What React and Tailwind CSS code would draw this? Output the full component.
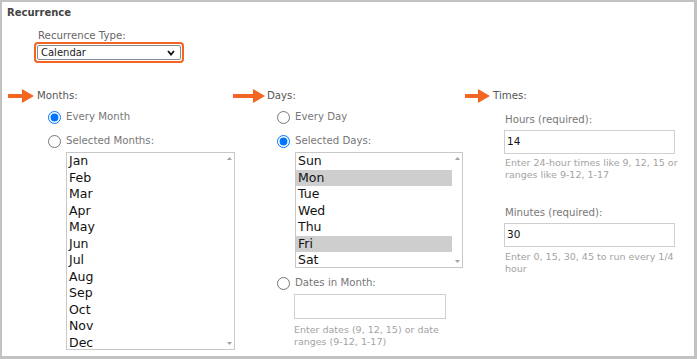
import React from "react";

const Arrow = ({ w }) => (
  <svg width={w} height="14" viewBox={`0 0 ${w} 14`} className="shrink-0">
    <rect x="0" y="5" width={w - 10} height="4" fill="#f26522" />
    <polygon points={`${w - 12},0 ${w},7 ${w - 12},14`} fill="#f26522" />
  </svg>
);

const Radio = ({ checked, label }) => (
  <label className="flex items-center h-[20px] pl-[46px] gap-[5px] text-[10.2px] text-[#777]">
    <input type="radio" readOnly checked={checked} className="w-[13px] h-[13px] m-0 shrink-0" />
    <span>{label}</span>
  </label>
);

const ListBox = ({ items, selected = [], w, h }) => (
  <div
    className="flex border border-[#c8c8c8] bg-white ml-[64px]"
    style={{ width: w, height: h }}
  >
    <div className="flex-1 flex flex-col">
      {items.map((it) => (
        <div
          key={it}
          className={`h-[16.5px] leading-[16.5px] pl-[2px] text-[12.5px] text-[#111] ${
            selected.includes(it) ? "bg-[#cecece]" : ""
          }`}
        >
          {it}
        </div>
      ))}
    </div>
    <div className="w-[10px] flex flex-col justify-between items-center py-[4px]">
      <svg width="5" height="3" viewBox="0 0 5 3">
        <polygon points="0,3 2.5,0 5,3" fill="#a3a3a3" />
      </svg>
      <svg width="5" height="3" viewBox="0 0 5 3">
        <polygon points="0,0 2.5,3 5,0" fill="#a3a3a3" />
      </svg>
    </div>
  </div>
);

const Help = ({ children, className = "" }) => (
  <div className={`text-[9.5px] leading-[12px] text-[#a3a3a3] ${className}`}>{children}</div>
);

const TextBox = ({ value, w, className = "" }) => (
  <div
    className={`h-[24px] border border-[#cfcfcf] bg-white flex items-center pl-[2px] text-[10.5px] text-[#111] ${className}`}
    style={{ width: w }}
  >
    {value}
  </div>
);

export default function App() {
  return (
    <div
      className="w-[697px] h-[359px] overflow-hidden bg-white border-t-2 border-l-2 border-r-[3px] border-b-[3px] border-[#c2c2c2]"
      style={{ fontFamily: "'DejaVu Sans', Verdana, sans-serif" }}
    >
      <div className="pl-[5px] pt-[3px] leading-[15px] text-[10px] font-bold text-[#444]">
        Recurrence
      </div>
      <div className="ml-[32px]">
        <div className="mt-[10px] leading-[12px] text-[10.2px] text-[#666] pl-[4px]">
          Recurrence Type:
        </div>
        <div className="w-[150px] h-[21px] border-2 border-[#f26522] rounded-[4px] p-[1px]">
          <div className="h-[15px] border border-[#8a8a8a] rounded-[2px] flex items-center justify-between pl-[3px] pr-[5px] text-[10px] text-[#222]">
            <span>Calendar</span>
            <svg width="8" height="6" viewBox="0 0 8 6">
              <polyline points="1,1 4,4.5 7,1" fill="none" stroke="#111" strokeWidth="1.8" />
            </svg>
          </div>
        </div>
      </div>

      <div className="flex mt-[25px]">
        {/* Months */}
        <div className="w-[229px] flex flex-col">
          <div className="flex items-center h-[16px] pl-[6px] gap-[3px] text-[10.2px] text-[#555]">
            <Arrow w={26} />
            <span>Months:</span>
          </div>
          <div className="mt-[3px]">
            <Radio checked label="Every Month" />
          </div>
          <div className="mt-[4px]">
            <Radio label="Selected Months:" />
          </div>
          <div className="mt-[1px]">
            <ListBox
              w={169}
              h={198}
              items={["Jan", "Feb", "Mar", "Apr", "May", "Jun", "Jul", "Aug", "Sep", "Oct", "Nov", "Dec"]}
            />
          </div>
        </div>

        {/* Days */}
        <div className="w-[232px] flex flex-col">
          <div className="flex items-center h-[16px] pl-[2px] gap-[2px] text-[10.2px] text-[#555]">
            <Arrow w={32} />
            <span>Days:</span>
          </div>
          <div className="mt-[3px]">
            <Radio label="Every Day" />
          </div>
          <div className="mt-[4px]">
            <Radio checked label="Selected Days:" />
          </div>
          <div className="mt-[1px]">
            <ListBox
              w={168}
              h={116}
              items={["Sun", "Mon", "Tue", "Wed", "Thu", "Fri", "Sat"]}
              selected={["Mon", "Fri"]}
            />
          </div>
          <div className="mt-[5px]">
            <Radio label="Dates in Month:" />
          </div>
          <div className="ml-[63px] mt-[1px]">
            <TextBox w={152} className="h-[25px]" />
            <Help className="mt-[5px]">
              Enter dates (9, 12, 15) or date
              <br />
              ranges (9-12, 1-17)
            </Help>
          </div>
        </div>

        {/* Times */}
        <div className="flex-1 flex flex-col">
          <div className="flex items-center h-[16px] pl-[2px] gap-[3px] text-[10.2px] text-[#555]">
            <Arrow w={25} />
            <span>Times:</span>
          </div>
          <div className="ml-[41px]">
            <div className="mt-[9px] leading-[14px] text-[10.2px] text-[#777] pl-[1px]">
              Hours (required):
            </div>
            <TextBox w={171} value="14" className="mt-[3px]" />
            <Help className="mt-[3px] pl-[1px]">
              Enter 24-hour times like 9, 12, 15 or
              <br />
              ranges like 9-12, 1-17
            </Help>
            <div className="mt-[25px] leading-[14px] text-[10.2px] text-[#777] pl-[1px]">
              Minutes (required):
            </div>
            <TextBox w={171} value="30" className="mt-[3px]" />
            <Help className="mt-[4px] pl-[1px]">
              Enter 0, 15, 30, 45 to run every 1/4
              <br />
              hour
            </Help>
          </div>
        </div>
      </div>
    </div>
  );
}
